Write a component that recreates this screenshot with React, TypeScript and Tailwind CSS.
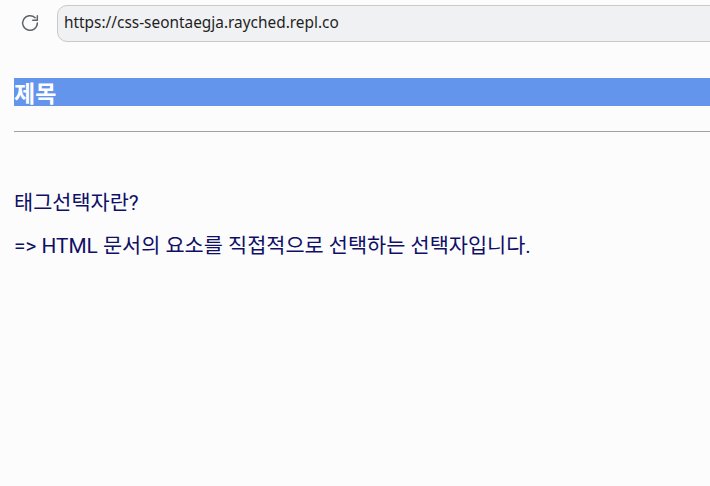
import React from "react";

export default function App() {
  return (
    <div className="w-[710px] h-[486px] bg-[#fcfcfd] overflow-hidden" style={{ fontFamily: '"Noto Sans", "Noto Sans CJK KR", sans-serif' }}>
      <div className="h-[46px] flex items-center">
        <div className="w-[57px] flex justify-center pl-[3px]">
          <svg width="22" height="22" viewBox="0 0 24 24" fill="none" stroke="#5f6368" strokeWidth="1.6" strokeLinecap="round" strokeLinejoin="round">
            <path d="M20 12a8 8 0 1 1-2.34-5.66" />
            <path d="M20 4v5h-5" />
          </svg>
        </div>
        <div className="flex-1 h-[37px] mr-[-20px] rounded-[10px] border border-[#c8c9cc] bg-[#f0f1f3] flex items-center pl-[6px] text-[15.4px] text-[#1f1f1f]">
          https://css-seontaegja.rayched.repl.co
        </div>
      </div>
      <div className="pl-[14px]">
        <div className="mt-[32px] h-[28px] bg-[#6495ed] text-white font-bold text-[23px] leading-[28px]" style={{ fontFamily: '"Noto Sans CJK KR", sans-serif' }}>
          제목
        </div>
        <div className="mt-[25px] h-px bg-[#a0a0a0]" />
        <div className="text-[#0f0f66] text-[20.8px]" style={{ fontFamily: 'Roboto, "Noto Sans CJK KR", sans-serif' }}>
          <p className="mt-[58px] leading-[26px]">태그선택자란?</p>
          <p className="mt-[17px] leading-[26px]">=&gt; HTML 문서의 요소를 직접적으로 선택하는 선택자입니다.</p>
        </div>
      </div>
    </div>
  );
}
